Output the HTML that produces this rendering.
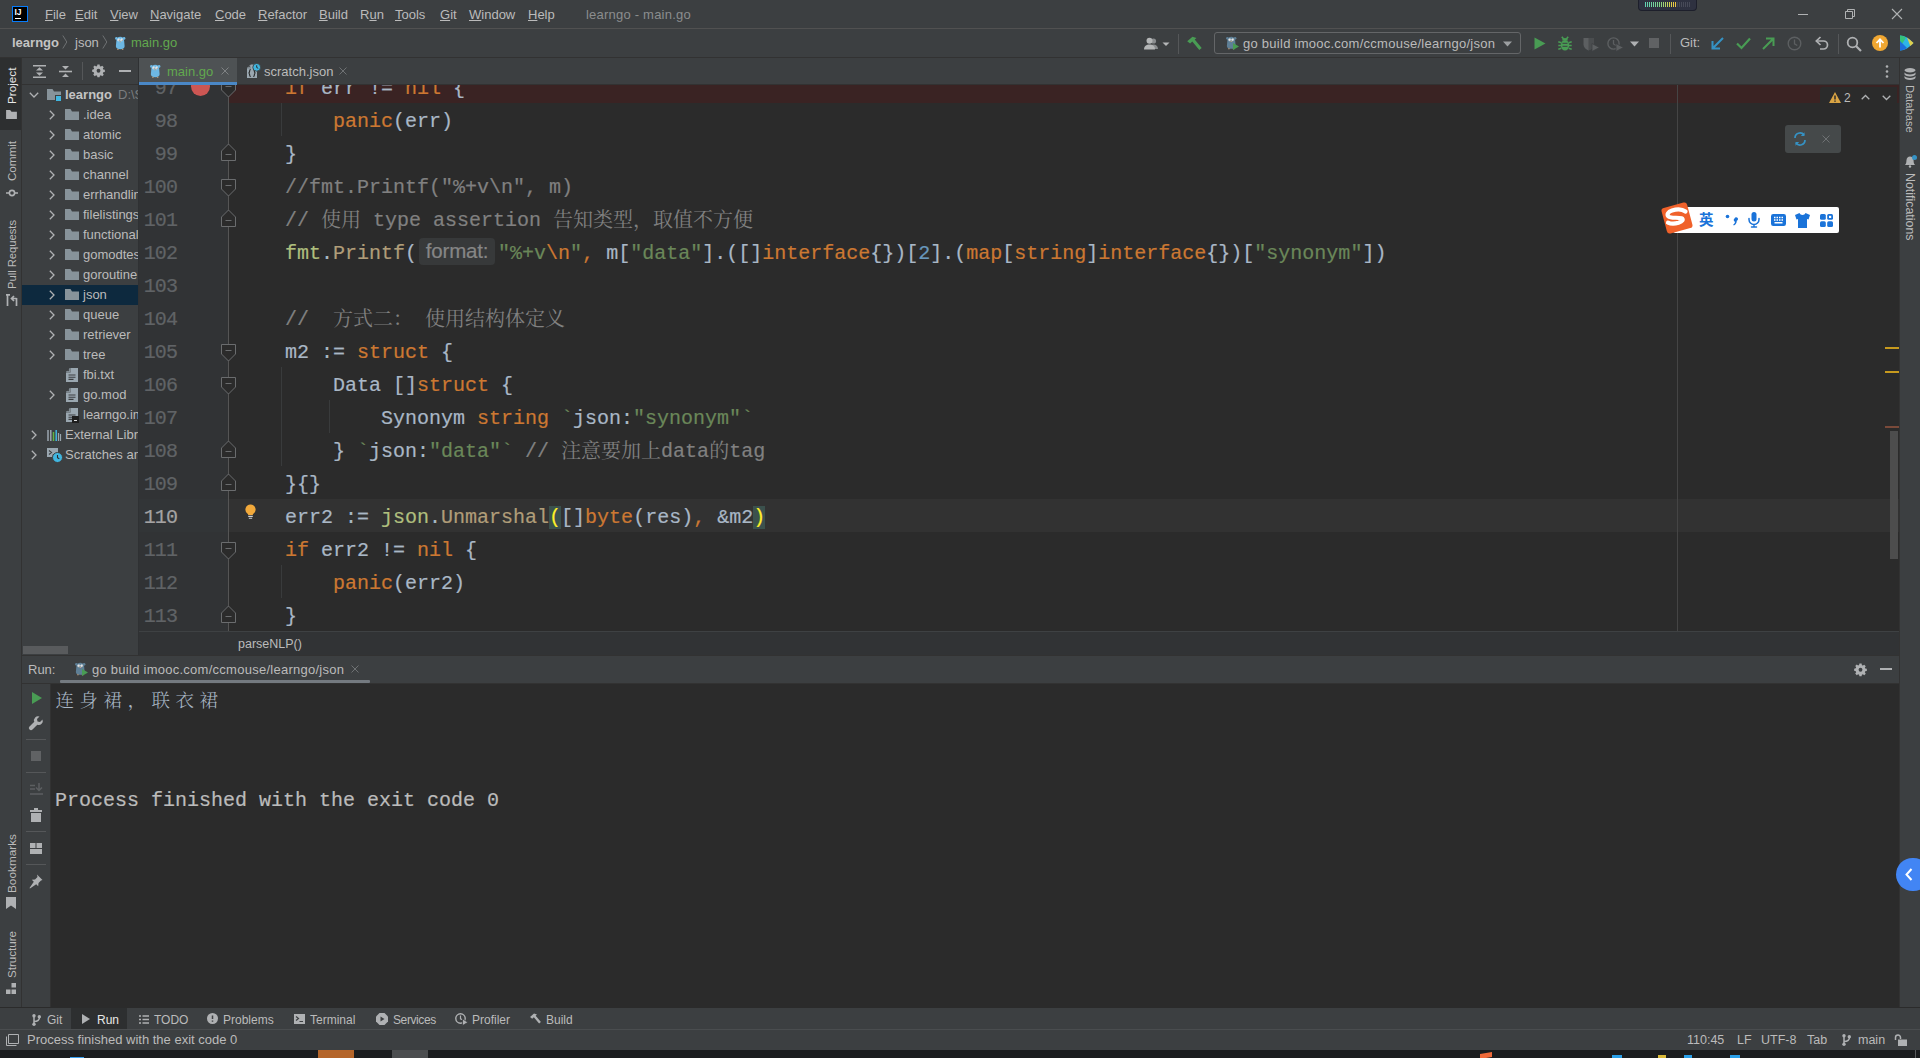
<!DOCTYPE html>
<html lang="en">
<head>
<meta charset="utf-8">
<title>learngo - main.go</title>
<style>
*{box-sizing:border-box;margin:0;padding:0}
html,body{width:1920px;height:1058px;overflow:hidden;background:#3c3f41}
body{position:relative;font-family:"Liberation Sans","Noto Sans CJK SC",sans-serif;font-size:13px;color:#bbbbbb}
.abs{position:absolute}
.t{position:absolute;white-space:nowrap;line-height:16px;height:16px}
svg{position:absolute;overflow:visible}
/* zones */
#titlebar{left:0;top:0;width:1920px;height:28px;background:#3c3f41}
#navbar{left:0;top:28px;width:1920px;height:29px;background:#3c3f41;border-top:1px solid #515151}
#navborder{left:0;top:57px;width:1920px;height:1px;background:#323232}
#leftstrip{left:0;top:58px;width:22px;height:949px;background:#3c3f41;border-right:1px solid #323232}
#rightstrip{left:1899px;top:58px;width:21px;height:949px;background:#3c3f41;border-left:1px solid #323232}
#project{left:22px;top:58px;width:117px;border-right:1px solid #2f3133;height:597px;background:#3c3f41;overflow:hidden}
#editor{left:139px;top:85px;width:1760px;height:546px;background:#2b2b2b;overflow:hidden}
#tabs{left:139px;top:58px;width:1760px;height:27px;background:#3c3f41;border-bottom:1px solid #323232}
#crumbs{left:139px;top:631px;width:1760px;height:24px;background:#313335;border-top:1px solid #3e4143}
#runpanel{left:22px;top:655px;width:1877px;height:352px;background:#2b2b2b;border-top:1px solid #323232}
#bottomstrip{left:0;top:1007px;width:1920px;height:22px;background:#3c3f41;border-top:1px solid #2b2b2b}
#statusbar{left:0;top:1029px;width:1920px;height:21px;background:#3c3f41;border-top:1px solid #4a4d4f}
#taskbar{left:0;top:1050px;width:1920px;height:8px;background:#1b1d1f}
/* code */
.code{-webkit-text-stroke:.2px;font-family:"Liberation Mono","Noto Serif CJK SC",monospace;font-size:20px;line-height:33px;color:#a9b7c6;white-space:pre}
.ln{-webkit-text-stroke:.2px;position:absolute;left:0;width:38px;letter-spacing:-.9px;text-align:right;font-family:"Liberation Mono",monospace;font-size:20px;line-height:33px;height:35px;padding-top:2px;color:#606366}
.cl{position:absolute;left:146px;height:33px;padding-top:2px}
.k{color:#cc7832}.s{color:#6a8759}.n{color:#6897bb}.c{color:#808080}.f{color:#b09d79}.p{color:#afbf7e}.b{color:#ffef28}
.vt{position:absolute;white-space:nowrap;font-size:13px;line-height:16px;transform-origin:0 0}
.hint{display:inline-block;vertical-align:top;margin:1px 3px 0 2px;width:76px;height:27px;line-height:26px;border-radius:4px;background:#37393a;color:#868686;font-family:"Liberation Sans",sans-serif;font-size:20.500px;text-align:center;letter-spacing:-.2px}
.mb{background:#3b514d;color:#ffef28}
#titlebar .t,#navbar .t,#tabs .t,#project .t,#bottomstrip .t,#statusbar .t{margin-top:1px}
#bottomstrip svg,#statusbar svg{margin-top:1px}
.z{position:relative;top:1px;-webkit-text-stroke:0}
</style>
</head>
<body>
<div id="titlebar" class="abs">
<svg style="left:12px;top:6px" width="16" height="16" viewBox="0 0 16 16"><rect x="0.5" y="0.5" width="15" height="15" fill="#000" stroke="#087cfa" stroke-width="1"/><text x="2.5" y="9" font-family="Liberation Sans,sans-serif" font-weight="bold" font-size="8.500" fill="#fff">IJ</text><rect x="3" y="12" width="6" height="1" fill="#fff"/></svg>
<span class="t m" style="left:45px;top:6px"><u>F</u>ile</span>
<span class="t m" style="left:75px;top:6px"><u>E</u>dit</span>
<span class="t m" style="left:110px;top:6px"><u>V</u>iew</span>
<span class="t m" style="left:150px;top:6px"><u>N</u>avigate</span>
<span class="t m" style="left:215px;top:6px"><u>C</u>ode</span>
<span class="t m" style="left:258px;top:6px"><u>R</u>efactor</span>
<span class="t m" style="left:319px;top:6px"><u>B</u>uild</span>
<span class="t m" style="left:360px;top:6px">R<u>u</u>n</span>
<span class="t m" style="left:395px;top:6px"><u>T</u>ools</span>
<span class="t m" style="left:440px;top:6px"><u>G</u>it</span>
<span class="t m" style="left:469px;top:6px"><u>W</u>indow</span>
<span class="t m" style="left:528px;top:6px"><u>H</u>elp</span>
<span class="t" style="left:586px;top:6px;color:#8b8d8e;letter-spacing:.22px">learngo - main.go</span>
<div class="abs" style="left:1638px;top:0;width:59px;height:11px;background:#2e3140;border:1px solid #1d1f2b;border-top:none;border-radius:0 0 4px 4px"></div>
<div class="abs" style="left:1645px;top:2px;width:32px;height:5px;background:linear-gradient(90deg,#5fd0b5,#7fd58a 45%,#e8cf45 85%,#f0c040)"></div>
<div class="abs" style="left:1677px;top:2px;width:14px;height:5px;background:#474a58"></div>
<div class="abs" style="left:1645px;top:2px;width:46px;height:5px;background:repeating-linear-gradient(90deg,transparent 0 1px,#2e3140 1px 2px)"></div>
<svg style="left:1797px;top:8px" width="12" height="12" viewBox="0 0 12 12"><path d="M1 6.5h10" stroke="#b0b2b3" stroke-width="1" fill="none"/></svg>
<svg style="left:1844px;top:8px" width="12" height="12" viewBox="0 0 12 12"><path d="M1.5 3.5h7v7h-7zM3.5 3.5v-2h7v7h-2" stroke="#b0b2b3" stroke-width="1" fill="none"/></svg>
<svg style="left:1891px;top:8px" width="12" height="12" viewBox="0 0 12 12"><path d="M1 1l10 10M11 1L1 11" stroke="#b0b2b3" stroke-width="1.1" fill="none"/></svg>
</div>
<div id="navbar" class="abs">
<span class="t" style="left:12px;top:5px;font-weight:bold;color:#c4c4c4">learngo</span>
<svg style="left:62px;top:5px" width="6" height="16" viewBox="0 0 6 16"><path d="M.8 1.500l4 6.500 -4 6.500" stroke="#6e7173" stroke-width="1" fill="none"/></svg>
<span class="t" style="left:75px;top:5px">json</span>
<svg style="left:102px;top:5px" width="6" height="16" viewBox="0 0 6 16"><path d="M.8 1.500l4 6.500 -4 6.500" stroke="#6e7173" stroke-width="1" fill="none"/></svg>
<svg style="left:115px;top:6.500px" width="10.500" height="14" viewBox="0 0 12 15" preserveAspectRatio="none"><ellipse cx="1.6" cy="2.6" rx="1.5" ry="1.5" fill="#6db7e3"/><ellipse cx="10.4" cy="2.6" rx="1.5" ry="1.5" fill="#6db7e3"/><path d="M1.5 5.5C1.5 2.3 3.5 0.8 6 0.8s4.500 1.500 4.500 4.700c0 2 .5 3.500 .5 5.500 0 2.200 -2 3.200 -5 3.200s-5 -1 -5 -3.200c0 -2 .5 -3.500 .5 -5.500z" fill="#6db7e3"/><circle cx="4.300" cy="4.200" r="1.500" fill="#fff"/><circle cx="7.700" cy="4.200" r="1.500" fill="#fff"/><circle cx="4.700" cy="4.400" r=".6" fill="#222"/><circle cx="8.100" cy="4.400" r=".6" fill="#222"/><ellipse cx="6" cy="6.100" rx="1" ry=".6" fill="#c9a27a"/><ellipse cx="3.300" cy="14.200" rx="1" ry=".6" fill="#c9a27a"/><ellipse cx="8.700" cy="14.200" rx="1" ry=".6" fill="#c9a27a"/></svg>
<span class="t" style="left:131px;top:5px;color:#62a84f">main.go</span>
<!-- right toolbar -->
<svg style="left:1144px;top:8px" width="28" height="14" viewBox="0 0 28 14"><circle cx="9.500" cy="4" r="2.600" fill="#8a8d8f"/><path d="M5 12c0 -3 2 -4.500 4.500 -4.500s4.500 1.500 4.500 4.500z" fill="#8a8d8f"/><circle cx="5.500" cy="3.800" r="3" fill="#b4b6b7"/><path d="M0 12.500c0 -3.500 2.300 -5 5.500 -5s5.500 1.500 5.500 5z" fill="#b4b6b7"/><path d="M18.500 5.500h7l-3.500 3.500z" fill="#b4b6b7"/></svg>
<div class="abs" style="left:1178px;top:5px;width:1px;height:20px;background:#555759"></div>
<svg style="left:1186px;top:7px" width="17" height="16" viewBox="0 0 17 16"><path d="M1.200 5.200L6.500 .8l4 1.200 -1.800 1.600 7 8.400 -2.400 2 -7 -8.400 -2.200 1.900z" fill="#499c54"/></svg>
<div class="abs" style="left:1214px;top:3px;width:307px;height:22px;border:1px solid #646668;border-radius:3px"></div>
<svg style="left:1226px;top:7px" width="10.500" height="13.500" viewBox="0 0 12 15" preserveAspectRatio="none"><ellipse cx="1.6" cy="2.6" rx="1.5" ry="1.5" fill="#5e7f96"/><ellipse cx="10.4" cy="2.6" rx="1.5" ry="1.5" fill="#5e7f96"/><path d="M1.5 5.5C1.5 2.3 3.5 0.8 6 0.8s4.500 1.500 4.500 4.700c0 2 .5 3.500 .5 5.500 0 2.200 -2 3.200 -5 3.200s-5 -1 -5 -3.200c0 -2 .5 -3.500 .5 -5.500z" fill="#5e7f96"/><circle cx="4.300" cy="4.200" r="1.500" fill="#fff"/><circle cx="7.700" cy="4.200" r="1.500" fill="#fff"/><circle cx="4.700" cy="4.400" r=".6" fill="#222"/><circle cx="8.100" cy="4.400" r=".6" fill="#222"/><ellipse cx="6" cy="6.100" rx="1" ry=".6" fill="#c9a27a"/><ellipse cx="3.300" cy="14.200" rx="1" ry=".6" fill="#c9a27a"/><ellipse cx="8.700" cy="14.200" rx="1" ry=".6" fill="#c9a27a"/></svg>
<svg style="left:1233px;top:14px" width="6" height="7" viewBox="0 0 6 7"><path d="M0 0l6 3.500 -6 3.500z" fill="#499c54"/></svg>
<span class="t" style="left:1243px;top:6px;letter-spacing:.26px" id="cfgtext">go build imooc.com/ccmouse/learngo/json</span>
<svg style="left:1503px;top:12px" width="9" height="6" viewBox="0 0 9 6"><path d="M0 .5h9l-4.500 5z" fill="#9c9fa1"/></svg>
<svg style="left:1534px;top:8px" width="12" height="13" viewBox="0 0 12 13"><path d="M.5 .5l11 6 -11 6z" fill="#499c54"/></svg>
<svg style="left:1558px;top:7px" width="14" height="15" viewBox="0 0 14 15"><ellipse cx="7" cy="9.200" rx="4.200" ry="5.300" fill="#499c54"/><path d="M4.200 4.600a2.800 2.600 0 0 1 5.600 0z" fill="#499c54"/><path d="M3.800 .8l1.800 2.200M10.200 .8l-1.800 2.200M.3 5.800l3 1M.3 9.500h3M.3 13.300l3 -1M13.700 5.800l-3 1M13.700 9.500h-3M13.700 13.300l-3 -1" stroke="#499c54" stroke-width="1.600" fill="none"/><path d="M4.500 7.300h5M4.500 10.300h5" stroke="#3c3f41" stroke-width="1" fill="none"/></svg>
<svg style="left:1583px;top:8px" width="17" height="15" viewBox="0 0 17 15"><path d="M.5 1h10v6.500c0 3 -2.500 5 -5 6 -2.500 -1 -5 -3 -5 -6z" fill="#5c5f61"/><path d="M5.500 1v12.400c2.500 -1 5 -3 5 -6V1z" fill="#4a4d4f"/><path d="M9 6.500l7.500 4 -7.500 4z" fill="#5c5f61" stroke="#3c3f41" stroke-width=".8"/></svg>
<svg style="left:1607px;top:8px" width="17" height="15" viewBox="0 0 17 15"><circle cx="6.500" cy="6.500" r="5.600" stroke="#5c5f61" stroke-width="1.400" fill="none"/><path d="M6.500 3v4l2.500 1.500" stroke="#5c5f61" stroke-width="1.300" fill="none"/><path d="M9 6.500l7.500 4 -7.500 4z" fill="#5c5f61" stroke="#3c3f41" stroke-width=".8"/></svg>
<svg style="left:1630px;top:12px" width="9" height="6" viewBox="0 0 9 6"><path d="M0 .5h9l-4.500 5z" fill="#afb1b3"/></svg>
<div class="abs" style="left:1649px;top:9px;width:10px;height:10px;background:#606264"></div>
<div class="abs" style="left:1670px;top:5px;width:1px;height:20px;background:#555759"></div>
<span class="t" style="left:1680px;top:5px">Git:</span>
<svg style="left:1711px;top:8px" width="13" height="13" viewBox="0 0 13 13"><path d="M12 1L2 11M1.500 4v7.500H9" stroke="#3592c4" stroke-width="2" fill="none"/></svg>
<svg style="left:1736px;top:8px" width="15" height="13" viewBox="0 0 15 13"><path d="M1 6.500l4.500 4.500L14 1.500" stroke="#499c54" stroke-width="2.200" fill="none"/></svg>
<svg style="left:1762px;top:8px" width="13" height="13" viewBox="0 0 13 13"><path d="M1 12L11 2M4 1.500h7.500V9" stroke="#499c54" stroke-width="2" fill="none"/></svg>
<svg style="left:1787px;top:7px" width="15" height="15" viewBox="0 0 15 15"><circle cx="7.500" cy="7.500" r="6.300" stroke="#5c5f61" stroke-width="1.400" fill="none"/><path d="M7.500 3.500v4.300l2.800 1.700" stroke="#5c5f61" stroke-width="1.300" fill="none"/></svg>
<svg style="left:1814px;top:7px" width="15" height="15" viewBox="0 0 15 15"><path d="M3 5h6.500a4 4 0 0 1 0 8H6" stroke="#afb1b3" stroke-width="1.700" fill="none"/><path d="M6.500 1L2.300 5l4.200 4" stroke="#afb1b3" stroke-width="1.700" fill="none"/></svg>
<div class="abs" style="left:1838px;top:5px;width:1px;height:20px;background:#555759"></div>
<svg style="left:1846px;top:7px" width="16" height="16" viewBox="0 0 16 16"><circle cx="6.500" cy="6.500" r="4.800" stroke="#afb1b3" stroke-width="1.800" fill="none"/><path d="M10 10l5 5" stroke="#afb1b3" stroke-width="2.200" fill="none"/></svg>
<svg style="left:1872px;top:6px" width="16" height="16" viewBox="0 0 16 16"><circle cx="8" cy="8" r="8" fill="#f0a732"/><path d="M8 12.500V5M4.500 8L8 4.300 11.500 8" stroke="#fff" stroke-width="1.800" fill="none"/></svg>
<svg style="left:1898px;top:6px" width="16" height="16" viewBox="0 0 16 16"><path d="M2 .5c5 0 9 3 13.500 7.500C11 12.500 7 15.500 2 15.500z" fill="#2fb5e8"/><path d="M2 .5c2 0 4 .8 6 2.200L2 12z" fill="#35c37a"/><path d="M2 15.500c2.500 0 5 -1 7 -2.500L2 6z" fill="#1d6fdc"/><path d="M9 2.500c2.200 1.400 4.300 3.300 6.500 5.500 -1 1 -2 2 -3.200 2.900z" fill="#f4d13a" opacity=".9"/></svg>
</div>
<div id="navborder" class="abs"></div>
<div id="leftstrip" class="abs">
<div class="abs" style="left:0;top:0;width:21px;height:72px;background:#2d2f30"></div>
<span class="vt" id="vproj" style="font-size:11.700px;left:4px;top:46px;transform:rotate(-90deg);color:#e8e8e8">Project</span>
<svg style="left:6px;top:52px" width="11" height="9" viewBox="0 0 12 10"><path d="M0 0h4.500l1.500 2H12v8H0z" fill="#afb1b3"/></svg>
<span class="vt" id="vcommit" style="margin-left:1px;font-size:11.600px;left:3px;top:123px;transform:rotate(-90deg)">Commit</span>
<svg style="left:5.500px;top:129.500px" width="12" height="10" viewBox="0 0 12 10"><circle cx="6" cy="5" r="2.600" stroke="#afb1b3" stroke-width="1.600" fill="none"/><path d="M0 5h3M9 5h3" stroke="#afb1b3" stroke-width="1.600"/></svg>
<span class="vt" id="vpull" style="margin-left:1px;font-size:11.200px;left:3px;top:231px;transform:rotate(-90deg)">Pull Requests</span>
<svg style="left:5.500px;top:236px" width="12" height="12" viewBox="0 0 12 12"><path d="M1.500 0v12M0 .8h4M10.500 4v8M10.500 4.500H5.500M8 2L5.500 4.500 8 7" stroke="#afb1b3" stroke-width="1.700" fill="none"/></svg>
<span class="vt" id="vbook" style="margin-left:1px;font-size:11.800px;left:3px;top:835px;transform:rotate(-90deg)">Bookmarks</span>
<svg style="left:6px;top:839px" width="10" height="12" viewBox="0 0 10 12"><path d="M0 0h10v12L5 8.500 0 12z" fill="#afb1b3"/></svg>
<span class="vt" id="vstruct" style="margin-left:1px;font-size:11.600px;left:3px;top:920px;transform:rotate(-90deg)">Structure</span>
<svg style="left:6px;top:925px" width="10" height="12" viewBox="0 0 10 12"><rect x="5.500" y="0" width="4.500" height="4.500" fill="#afb1b3"/><rect x="0" y="6.500" width="4.500" height="4.500" fill="#afb1b3"/><rect x="5.500" y="6.500" width="4.500" height="4.500" fill="#afb1b3"/></svg>
</div>
<div id="rightstrip" class="abs">
<svg style="left:4px;top:10px" width="12" height="12" viewBox="0 0 12 12"><ellipse cx="6" cy="2.200" rx="5.500" ry="2.200" fill="#afb1b3"/><path d="M.5 4.300c0 1.200 2.500 2.100 5.500 2.100s5.500 -.9 5.500 -2.100v2c0 1.200 -2.500 2.100 -5.500 2.100S.5 7.500 .5 6.300zM.5 7.800c0 1.200 2.500 2.100 5.500 2.100s5.500 -.9 5.500 -2.100v2c0 1.200 -2.500 2.100 -5.500 2.100S.5 11 .5 9.800z" fill="#afb1b3"/></svg>
<span class="vt" id="vdb" style="font-size:11.150px;left:17.500px;top:27px;transform:rotate(90deg)">Database</span>
<svg style="left:4px;top:97px" width="14" height="13" viewBox="0 0 14 13"><path d="M1 10c1.500 -1.500 1.200 -3 1.500 -5C2.800 3 4 1.500 6 1.500S9.200 3 9.500 5c.3 2 0 3.500 1.500 5z" fill="#afb1b3"/><circle cx="6" cy="11.500" r="1.200" fill="#afb1b3"/><circle cx="10.500" cy="2.500" r="2.500" fill="#3592c4"/></svg>
<span class="vt" id="vnotif" style="font-size:12.400px;left:18px;top:115px;transform:rotate(90deg)">Notifications</span>
</div>
<div id="project" class="abs">
<div class="abs" style="left:0;top:227px;width:117px;height:20px;background:#0d293e"></div>
<svg style="left:11px;top:7px" width="13" height="13" viewBox="0 0 13 13"><path d="M0 .8h13M0 12.200h13" stroke="#afb1b3" stroke-width="1.600"/><path d="M3 5.500L6.500 2.200 10 5.500zM3 7.500L6.500 10.800 10 7.500z" fill="#afb1b3"/></svg>
<svg style="left:37px;top:7px" width="13" height="13" viewBox="0 0 13 13"><path d="M0 6.500h13" stroke="#afb1b3" stroke-width="1.600"/><path d="M3 1L6.500 4.500 10 1zM3 12L6.500 8.500 10 12z" fill="#afb1b3"/></svg>
<div class="abs" style="left:60px;top:4px;width:1px;height:18px;background:#555759"></div>
<svg style="left:70px;top:5.500px" width="13" height="13.500" viewBox="-0.8 -0.4 15.6 15.6"><path d="M5.700 0h2.600l.4 1.900 1.200.5 1.600-1.100 1.800 1.800-1.100 1.600.5 1.200 1.900.4v2.600l-1.900.4-.5 1.200 1.100 1.600-1.800 1.800-1.600-1.100-1.200.5-.4 1.900H5.700l-.4-1.900-1.200-.5-1.600 1.100L.7 11.900l1.100-1.600-.5-1.200L-.6 8.700V6.100l1.900-.4.500-1.200L.7 2.900 2.500 1.100l1.600 1.100 1.200-.5z" fill="#afb1b3"/><circle cx="7" cy="7.400" r="2.300" fill="#3c3f41"/></svg>
<div class="abs" style="left:97px;top:12px;width:12px;height:2px;background:#afb1b3"></div>
<div class="abs" style="left:0;top:26px;width:117px;height:1px;background:#323232"></div>
<svg style="left:7px;top:34px" width="10" height="6" viewBox="0 0 10 6"><path d="M.8 .8L5 5 9.200 .8" stroke="#afb1b3" stroke-width="1.300" fill="none"/></svg><svg style="left:25px;top:31px" width="14" height="11" viewBox="0 0 14 11"><path d="M0 0h5.500l1.500 2.500H14V11H0z" fill="#87939a"/></svg><div class="abs" style="left:33px;top:37px;width:7px;height:7px;background:#40b6e0;border:1px solid #3c3f41"></div><span class="t" style="left:43px;top:28px;font-weight:bold;color:#c4c4c4">learngo</span><span class="t" style="left:96px;top:28px;color:#7a7d7f">D:\S</span>
<svg style="left:27px;top:52px" width="6" height="10" viewBox="0 0 6 10"><path d="M.8 .8L5 5 .8 9.200" stroke="#afb1b3" stroke-width="1.300" fill="none"/></svg><svg style="left:43px;top:51px" width="14" height="11" viewBox="0 0 14 11"><path d="M0 0h5.500l1.500 2.500H14V11H0z" fill="#87939a"/></svg><span class="t" style="left:61px;top:48px">.idea</span>
<svg style="left:27px;top:72px" width="6" height="10" viewBox="0 0 6 10"><path d="M.8 .8L5 5 .8 9.200" stroke="#afb1b3" stroke-width="1.300" fill="none"/></svg><svg style="left:43px;top:71px" width="14" height="11" viewBox="0 0 14 11"><path d="M0 0h5.500l1.500 2.500H14V11H0z" fill="#87939a"/></svg><span class="t" style="left:61px;top:68px">atomic</span>
<svg style="left:27px;top:92px" width="6" height="10" viewBox="0 0 6 10"><path d="M.8 .8L5 5 .8 9.200" stroke="#afb1b3" stroke-width="1.300" fill="none"/></svg><svg style="left:43px;top:91px" width="14" height="11" viewBox="0 0 14 11"><path d="M0 0h5.500l1.500 2.500H14V11H0z" fill="#87939a"/></svg><span class="t" style="left:61px;top:88px">basic</span>
<svg style="left:27px;top:112px" width="6" height="10" viewBox="0 0 6 10"><path d="M.8 .8L5 5 .8 9.200" stroke="#afb1b3" stroke-width="1.300" fill="none"/></svg><svg style="left:43px;top:111px" width="14" height="11" viewBox="0 0 14 11"><path d="M0 0h5.500l1.500 2.500H14V11H0z" fill="#87939a"/></svg><span class="t" style="left:61px;top:108px">channel</span>
<svg style="left:27px;top:132px" width="6" height="10" viewBox="0 0 6 10"><path d="M.8 .8L5 5 .8 9.200" stroke="#afb1b3" stroke-width="1.300" fill="none"/></svg><svg style="left:43px;top:131px" width="14" height="11" viewBox="0 0 14 11"><path d="M0 0h5.500l1.500 2.500H14V11H0z" fill="#87939a"/></svg><span class="t" style="left:61px;top:128px">errhandling</span>
<svg style="left:27px;top:152px" width="6" height="10" viewBox="0 0 6 10"><path d="M.8 .8L5 5 .8 9.200" stroke="#afb1b3" stroke-width="1.300" fill="none"/></svg><svg style="left:43px;top:151px" width="14" height="11" viewBox="0 0 14 11"><path d="M0 0h5.500l1.500 2.500H14V11H0z" fill="#87939a"/></svg><span class="t" style="left:61px;top:148px">filelistingserver</span>
<svg style="left:27px;top:172px" width="6" height="10" viewBox="0 0 6 10"><path d="M.8 .8L5 5 .8 9.200" stroke="#afb1b3" stroke-width="1.300" fill="none"/></svg><svg style="left:43px;top:171px" width="14" height="11" viewBox="0 0 14 11"><path d="M0 0h5.500l1.500 2.500H14V11H0z" fill="#87939a"/></svg><span class="t" style="left:61px;top:168px">functional</span>
<svg style="left:27px;top:192px" width="6" height="10" viewBox="0 0 6 10"><path d="M.8 .8L5 5 .8 9.200" stroke="#afb1b3" stroke-width="1.300" fill="none"/></svg><svg style="left:43px;top:191px" width="14" height="11" viewBox="0 0 14 11"><path d="M0 0h5.500l1.500 2.500H14V11H0z" fill="#87939a"/></svg><span class="t" style="left:61px;top:188px">gomodtest</span>
<svg style="left:27px;top:212px" width="6" height="10" viewBox="0 0 6 10"><path d="M.8 .8L5 5 .8 9.200" stroke="#afb1b3" stroke-width="1.300" fill="none"/></svg><svg style="left:43px;top:211px" width="14" height="11" viewBox="0 0 14 11"><path d="M0 0h5.500l1.500 2.500H14V11H0z" fill="#87939a"/></svg><span class="t" style="left:61px;top:208px">goroutine</span>
<svg style="left:27px;top:232px" width="6" height="10" viewBox="0 0 6 10"><path d="M.8 .8L5 5 .8 9.200" stroke="#afb1b3" stroke-width="1.300" fill="none"/></svg><svg style="left:43px;top:231px" width="14" height="11" viewBox="0 0 14 11"><path d="M0 0h5.500l1.500 2.500H14V11H0z" fill="#87939a"/></svg><span class="t" style="left:61px;top:228px">json</span>
<svg style="left:27px;top:252px" width="6" height="10" viewBox="0 0 6 10"><path d="M.8 .8L5 5 .8 9.200" stroke="#afb1b3" stroke-width="1.300" fill="none"/></svg><svg style="left:43px;top:251px" width="14" height="11" viewBox="0 0 14 11"><path d="M0 0h5.500l1.500 2.500H14V11H0z" fill="#87939a"/></svg><span class="t" style="left:61px;top:248px">queue</span>
<svg style="left:27px;top:272px" width="6" height="10" viewBox="0 0 6 10"><path d="M.8 .8L5 5 .8 9.200" stroke="#afb1b3" stroke-width="1.300" fill="none"/></svg><svg style="left:43px;top:271px" width="14" height="11" viewBox="0 0 14 11"><path d="M0 0h5.500l1.500 2.500H14V11H0z" fill="#87939a"/></svg><span class="t" style="left:61px;top:268px">retriever</span>
<svg style="left:27px;top:292px" width="6" height="10" viewBox="0 0 6 10"><path d="M.8 .8L5 5 .8 9.200" stroke="#afb1b3" stroke-width="1.300" fill="none"/></svg><svg style="left:43px;top:291px" width="14" height="11" viewBox="0 0 14 11"><path d="M0 0h5.500l1.500 2.500H14V11H0z" fill="#87939a"/></svg><span class="t" style="left:61px;top:288px">tree</span>
<svg style="left:44px;top:310px" width="12" height="14" viewBox="0 0 12 14"><path d="M4.500 0H12v14H0V4.500z" fill="#9aa7b0"/><path d="M0 4.500L4.500 0v4.500z" fill="#3c3f41"/><path d="M3.800 .3v3.500H.3" stroke="#9aa7b0" stroke-width="1" fill="none"/><path d="M2.500 7h7M2.500 9.200h7M2.500 11.400h5" stroke="#3c3f41" stroke-width="1.100"/></svg><span class="t" style="left:61px;top:308px">fbi.txt</span>
<svg style="left:27px;top:332px" width="6" height="10" viewBox="0 0 6 10"><path d="M.8 .8L5 5 .8 9.200" stroke="#afb1b3" stroke-width="1.300" fill="none"/></svg><svg style="left:44px;top:330px" width="12" height="14" viewBox="0 0 12 14"><path d="M4.500 0H12v14H0V4.500z" fill="#9aa7b0"/><path d="M0 4.500L4.500 0v4.500z" fill="#3c3f41"/><path d="M3.800 .3v3.500H.3" stroke="#9aa7b0" stroke-width="1" fill="none"/><path d="M2.500 7h7M2.500 9.200h7M2.500 11.400h5" stroke="#3c3f41" stroke-width="1.100"/></svg><span class="t" style="left:61px;top:328px">go.mod</span>
<svg style="left:44px;top:350px" width="12" height="14" viewBox="0 0 12 14"><path d="M4.500 0H12v14H0V4.500z" fill="#9aa7b0"/><path d="M0 4.500L4.500 0v4.500z" fill="#3c3f41"/><path d="M3.800 .3v3.500H.3" stroke="#9aa7b0" stroke-width="1" fill="none"/><path d="M2.500 7h7M2.500 9.200h7M2.500 11.400h5" stroke="#3c3f41" stroke-width="1.100"/></svg><div class="abs" style="left:50px;top:358px;width:7px;height:7px;background:#1e1e1e"></div><div class="abs" style="left:52px;top:362px;width:3px;height:1px;background:#ddd"></div><span class="t" style="left:61px;top:348px">learngo.iml</span>
<svg style="left:9px;top:372px" width="6" height="10" viewBox="0 0 6 10"><path d="M.8 .8L5 5 .8 9.200" stroke="#afb1b3" stroke-width="1.300" fill="none"/></svg><svg style="left:25px;top:371px" width="14" height="12" viewBox="0 0 14 12"><path d="M1 1v11M3.800 1v11" stroke="#9aa7b0" stroke-width="1.500"/><path d="M6.500 3v9" stroke="#62b543" stroke-width="1.500"/><path d="M9.200 1v11" stroke="#40b6e0" stroke-width="1.500"/><path d="M11.500 4v8M13.500 5v7" stroke="#9aa7b0" stroke-width="1.200"/></svg><span class="t" style="left:43px;top:368px">External Libraries</span>
<svg style="left:9px;top:392px" width="6" height="10" viewBox="0 0 6 10"><path d="M.8 .8L5 5 .8 9.200" stroke="#afb1b3" stroke-width="1.300" fill="none"/></svg><svg style="left:25px;top:389px" width="16" height="16" viewBox="0 0 16 16"><path d="M0 1h11v9H0z" fill="#9aa7b0"/><path d="M2 3.500l2.500 2L2 7.500M5.500 8H9" stroke="#3c3f41" stroke-width="1.100" fill="none"/><circle cx="10.500" cy="10.500" r="5" fill="#40b6e0" stroke="#3c3f41" stroke-width="1"/><path d="M10.500 8v2.800l1.800 1" stroke="#2b2b2b" stroke-width="1.100" fill="none"/></svg><span class="t" style="left:43px;top:388px">Scratches and Consoles</span>
<div class="abs" style="left:1px;top:588px;width:45px;height:8px;background:#595b5d"></div>
</div>
<div id="tabs" class="abs">
<div class="abs" style="left:0;top:0;width:98px;height:27px;background:#4e5254"></div>
<div class="abs" style="left:0;top:24px;width:98px;height:3px;background:#4a88c7"></div>
<svg style="left:10.500px;top:5.500px" width="10.500" height="14" viewBox="0 0 12 15" preserveAspectRatio="none"><ellipse cx="1.6" cy="2.6" rx="1.5" ry="1.5" fill="#6db7e3"/><ellipse cx="10.4" cy="2.6" rx="1.5" ry="1.5" fill="#6db7e3"/><path d="M1.5 5.5C1.5 2.3 3.5 0.8 6 0.8s4.500 1.500 4.500 4.700c0 2 .5 3.500 .5 5.500 0 2.200 -2 3.200 -5 3.200s-5 -1 -5 -3.200c0 -2 .5 -3.500 .5 -5.500z" fill="#6db7e3"/><circle cx="4.300" cy="4.200" r="1.500" fill="#fff"/><circle cx="7.700" cy="4.200" r="1.500" fill="#fff"/><circle cx="4.700" cy="4.400" r=".6" fill="#222"/><circle cx="8.100" cy="4.400" r=".6" fill="#222"/><ellipse cx="6" cy="6.100" rx="1" ry=".6" fill="#c9a27a"/><ellipse cx="3.300" cy="14.200" rx="1" ry=".6" fill="#c9a27a"/><ellipse cx="8.700" cy="14.200" rx="1" ry=".6" fill="#c9a27a"/></svg>
<span class="t" style="left:28px;top:5px;color:#62a84f">main.go</span>
<svg style="left:82px;top:9px" width="8" height="8" viewBox="0 0 8 8"><path d="M.5 .5l7 7M7.500 .5l-7 7" stroke="#7f8284" stroke-width="1" fill="none"/></svg>
<svg style="left:108px;top:5px" width="14" height="16" viewBox="0 0 14 16"><path d="M3.800 1.500H10V15H0V5.300z" fill="#9aa7b0"/><path d="M0 5.300L3.800 1.500v3.800z" fill="#3c3f41"/><path d="M3.300 2v2.800H.5" stroke="#9aa7b0" stroke-width="1" fill="none"/><path d="M3.800 6.500c-1.200 0 -1.200 1 -1.200 1.800s0 1.500 -1 1.700c1 .2 1 .9 1 1.700s0 1.800 1.200 1.800M6.200 6.500c1.200 0 1.200 1 1.200 1.800s0 1.500 1 1.700c-1 .2 -1 .9 -1 1.700s0 1.800 -1.200 1.800" stroke="#2b2d2e" stroke-width="1.200" fill="none"/><circle cx="9.700" cy="4.300" r="3.900" fill="#40b6e0" stroke="#3c3f41" stroke-width=".9"/><path d="M9.700 2.300v2.200l1.500 .8" stroke="#2b2b2b" stroke-width="1" fill="none"/></svg>
<span class="t" style="left:125px;top:5px">scratch.json</span>
<svg style="left:200px;top:9px" width="8" height="8" viewBox="0 0 8 8"><path d="M.5 .5l7 7M7.500 .5l-7 7" stroke="#6e7173" stroke-width="1" fill="none"/></svg>
<svg style="left:1746px;top:7px" width="4" height="13" viewBox="0 0 4 13"><circle cx="2" cy="1.500" r="1.300" fill="#afb1b3"/><circle cx="2" cy="6.500" r="1.300" fill="#afb1b3"/><circle cx="2" cy="11.500" r="1.300" fill="#afb1b3"/></svg>
</div>
<div id="editor" class="abs">
<div class="abs" style="left:0;top:0;width:89px;height:546px;background:#313335"></div>
<div class="abs" style="left:89px;top:0;width:1671px;height:18px;background:#3a2323"></div>
<div class="abs" style="left:0;top:414px;width:1760px;height:33px;background:#323232"></div>
<div class="abs" style="left:0;top:414px;width:89px;height:33px;background:#323537"></div>
<div class="abs" style="left:89px;top:0;width:1px;height:546px;background:#555555"></div>
<div class="abs" style="left:1538px;top:0;width:1px;height:546px;background:#454545"></div>
<div class="abs" style="left:142px;top:18px;width:1px;height:33px;background:#393b3c"></div>
<div class="abs" style="left:142px;top:282px;width:1px;height:99px;background:#393b3c"></div>
<div class="abs" style="left:190px;top:315px;width:1px;height:33px;background:#393b3c"></div>
<div class="abs" style="left:142px;top:480px;width:1px;height:33px;background:#393b3c"></div>
<div class="ln" style="top:-15px">97</div>
<div class="cl code" style="top:-15px"><span class="k">if</span> err != <span class="k">nil</span> {</div>
<div class="ln" style="top:18px">98</div>
<div class="cl code" style="top:18px">    <span class="k">panic</span>(err)</div>
<div class="ln" style="top:51px">99</div>
<div class="cl code" style="top:51px">}</div>
<div class="ln" style="top:84px">100</div>
<div class="cl code" style="top:84px"><span class="c">//fmt.Printf("%+v\n", m)</span></div>
<div class="ln" style="top:117px">101</div>
<div class="cl code" style="top:117px"><span class="c">// <span class="z">使用</span> type assertion <span class="z">告知类型，取值不方便</span></span></div>
<div class="ln" style="top:150px">102</div>
<div class="cl code" style="top:150px"><span class="p">fmt</span>.<span class="f">Printf</span>(<span class="hint">format:</span><span class="s">"%+v<span class="k">\n</span>"</span><span class="k">,</span> m[<span class="s">"data"</span>].([]<span class="k">interface</span>{})[<span class="n">2</span>].(<span class="k">map</span>[<span class="k">string</span>]<span class="k">interface</span>{})[<span class="s">"synonym"</span>])</div>
<div class="ln" style="top:183px">103</div>
<div class="cl code" style="top:183px"></div>
<div class="ln" style="top:216px">104</div>
<div class="cl code" style="top:216px"><span class="c">//  <span class="z">方式二：</span> <span class="z">使用结构体定义</span></span></div>
<div class="ln" style="top:249px">105</div>
<div class="cl code" style="top:249px">m2 := <span class="k">struct</span> {</div>
<div class="ln" style="top:282px">106</div>
<div class="cl code" style="top:282px">    Data []<span class="k">struct</span> {</div>
<div class="ln" style="top:315px">107</div>
<div class="cl code" style="top:315px">        Synonym <span class="k">string</span> <span class="s">`</span>json:<span class="s">"synonym"</span><span class="s">`</span></div>
<div class="ln" style="top:348px">108</div>
<div class="cl code" style="top:348px">    } <span class="s">`</span>json:<span class="s">"data"</span><span class="s">`</span> <span class="c">// <span class="z">注意要加上</span>data<span class="z">的</span>tag</span></div>
<div class="ln" style="top:381px">109</div>
<div class="cl code" style="top:381px">}{}</div>
<div class="ln" style="top:414px;color:#a4a3a3">110</div>
<div class="cl code" style="top:414px">err2 := <span class="p">json</span>.<span class="f">Unmarshal</span><span class="mb">(</span>[]<span class="k">byte</span>(res)<span class="k">,</span> &amp;m2<span class="mb">)</span></div>
<div class="ln" style="top:447px">111</div>
<div class="cl code" style="top:447px"><span class="k">if</span> err2 != <span class="k">nil</span> {</div>
<div class="ln" style="top:480px">112</div>
<div class="cl code" style="top:480px">    <span class="k">panic</span>(err2)</div>
<div class="ln" style="top:513px">113</div>
<div class="cl code" style="top:513px">}</div>
<svg style="left:82px;top:-5px" width="15" height="18" viewBox="0 0 15 18"><path d="M.5 .5h14v9.500l-7 7 -7 -7z" fill="#2b2b2b" stroke="#6a6c6e" stroke-width="1"/><path d="M4.500 6.500h6" stroke="#6a6c6e" stroke-width="1"/></svg>
<svg style="left:82px;top:58px" width="15" height="18" viewBox="0 0 15 18"><path d="M.5 17.500h14V8l-7 -7 -7 7z" fill="#2b2b2b" stroke="#6a6c6e" stroke-width="1"/><path d="M4.500 11.500h6" stroke="#6a6c6e" stroke-width="1"/></svg>
<svg style="left:82px;top:94px" width="15" height="18" viewBox="0 0 15 18"><path d="M.5 .5h14v9.500l-7 7 -7 -7z" fill="#2b2b2b" stroke="#6a6c6e" stroke-width="1"/><path d="M4.500 6.500h6" stroke="#6a6c6e" stroke-width="1"/></svg>
<svg style="left:82px;top:124px" width="15" height="18" viewBox="0 0 15 18"><path d="M.5 17.500h14V8l-7 -7 -7 7z" fill="#2b2b2b" stroke="#6a6c6e" stroke-width="1"/><path d="M4.500 11.500h6" stroke="#6a6c6e" stroke-width="1"/></svg>
<svg style="left:82px;top:259px" width="15" height="18" viewBox="0 0 15 18"><path d="M.5 .5h14v9.500l-7 7 -7 -7z" fill="#2b2b2b" stroke="#6a6c6e" stroke-width="1"/><path d="M4.500 6.500h6" stroke="#6a6c6e" stroke-width="1"/></svg>
<svg style="left:82px;top:292px" width="15" height="18" viewBox="0 0 15 18"><path d="M.5 .5h14v9.500l-7 7 -7 -7z" fill="#2b2b2b" stroke="#6a6c6e" stroke-width="1"/><path d="M4.500 6.500h6" stroke="#6a6c6e" stroke-width="1"/></svg>
<svg style="left:82px;top:355px" width="15" height="18" viewBox="0 0 15 18"><path d="M.5 17.500h14V8l-7 -7 -7 7z" fill="#2b2b2b" stroke="#6a6c6e" stroke-width="1"/><path d="M4.500 11.500h6" stroke="#6a6c6e" stroke-width="1"/></svg>
<svg style="left:82px;top:388px" width="15" height="18" viewBox="0 0 15 18"><path d="M.5 17.500h14V8l-7 -7 -7 7z" fill="#2b2b2b" stroke="#6a6c6e" stroke-width="1"/><path d="M4.500 11.500h6" stroke="#6a6c6e" stroke-width="1"/></svg>
<svg style="left:82px;top:457px" width="15" height="18" viewBox="0 0 15 18"><path d="M.5 .5h14v9.500l-7 7 -7 -7z" fill="#2b2b2b" stroke="#6a6c6e" stroke-width="1"/><path d="M4.500 6.500h6" stroke="#6a6c6e" stroke-width="1"/></svg>
<svg style="left:82px;top:520px" width="15" height="18" viewBox="0 0 15 18"><path d="M.5 17.500h14V8l-7 -7 -7 7z" fill="#2b2b2b" stroke="#6a6c6e" stroke-width="1"/><path d="M4.500 11.500h6" stroke="#6a6c6e" stroke-width="1"/></svg>
<div class="abs" style="left:52px;top:-8.500px;width:19px;height:19px;border-radius:9.500px;background:#cc5653"></div>
<svg style="left:106px;top:419px" width="11" height="15.600" viewBox="0 0 12 17"><path d="M6 .5a5.500 5.500 0 0 1 3.200 10c-.5 .4 -.7 .9 -.7 1.500h-5c0 -.6 -.2 -1.100 -.7 -1.500A5.500 5.500 0 0 1 6 .5z" fill="#f2a93b"/><path d="M3.500 13.500h5M4.200 15.500h3.600" stroke="#d0d0d0" stroke-width="1.200"/></svg>
<div class="abs" style="left:1681px;top:2px;width:77px;height:21px;background:#2b2b2b;border-radius:3px 0 0 0"></div>
<svg style="left:1690px;top:7px" width="12" height="11" viewBox="0 0 12 11"><path d="M6 0l6 11H0z" fill="#d9a343"/><path d="M6 3.500v4M6 8.500v1.300" stroke="#2b2b2b" stroke-width="1.500"/></svg>
<span class="t" style="left:1705px;top:5px;font-size:12px">2</span>
<svg style="left:1722px;top:9px" width="9" height="6" viewBox="0 0 9 6"><path d="M.7 5.300L4.500 1.500 8.300 5.300" stroke="#afb1b3" stroke-width="1.300" fill="none"/></svg>
<svg style="left:1743px;top:10px" width="9" height="6" viewBox="0 0 9 6"><path d="M.7 .7L4.500 4.500 8.300 .7" stroke="#afb1b3" stroke-width="1.300" fill="none"/></svg>
<div class="abs" style="left:1646px;top:40px;width:56px;height:28px;background:#45494a;border-radius:3px"></div>
<svg style="left:1654px;top:47px" width="14" height="14" viewBox="0 0 14 14"><path d="M2 6a5 5 0 0 1 9 -3M12 8a5 5 0 0 1 -9 3" stroke="#3592c4" stroke-width="1.700" fill="none"/><path d="M11.500 .3v3.700H7.800zM2.500 13.700V10h3.700z" fill="#3592c4"/></svg>
<svg style="left:1683px;top:50px" width="8" height="8" viewBox="0 0 8 8"><path d="M.5 .5l7 7M7.500 .5l-7 7" stroke="#6e7173" stroke-width="1" fill="none"/></svg>
<div class="abs" style="left:1746px;top:262px;width:14px;height:2px;background:#c79a1e"></div>
<div class="abs" style="left:1746px;top:286px;width:14px;height:2px;background:#c79a1e"></div>
<div class="abs" style="left:1746px;top:341px;width:14px;height:2px;background:#7a4a3a"></div>
<div class="abs" style="left:1751px;top:346px;width:8px;height:128px;background:#4d4d4d"></div>
</div>
<div id="crumbs" class="abs"><span class="t" style="left:99px;top:4px;font-size:12.500px">parseNLP()</span></div>
<div id="runpanel" class="abs">
<div class="abs" style="left:0;top:0;width:1877px;height:27px;background:#3c3f41"></div>
<div class="abs" style="left:0;top:27px;width:1877px;height:1px;background:#323232"></div>
<span class="t" style="left:6px;top:6px">Run:</span>
<svg style="left:53px;top:6px" width="10.500" height="13.500" viewBox="0 0 12 15" preserveAspectRatio="none"><ellipse cx="1.6" cy="2.6" rx="1.5" ry="1.5" fill="#5e7f96"/><ellipse cx="10.4" cy="2.6" rx="1.5" ry="1.5" fill="#5e7f96"/><path d="M1.5 5.5C1.5 2.3 3.5 0.8 6 0.8s4.500 1.500 4.500 4.700c0 2 .5 3.500 .5 5.500 0 2.200 -2 3.200 -5 3.200s-5 -1 -5 -3.200c0 -2 .5 -3.500 .5 -5.500z" fill="#5e7f96"/><circle cx="4.300" cy="4.200" r="1.500" fill="#fff"/><circle cx="7.700" cy="4.200" r="1.500" fill="#fff"/><circle cx="4.700" cy="4.400" r=".6" fill="#222"/><circle cx="8.100" cy="4.400" r=".6" fill="#222"/><ellipse cx="6" cy="6.100" rx="1" ry=".6" fill="#c9a27a"/><ellipse cx="3.300" cy="14.200" rx="1" ry=".6" fill="#c9a27a"/><ellipse cx="8.700" cy="14.200" rx="1" ry=".6" fill="#c9a27a"/></svg>
<svg style="left:60px;top:13px" width="6" height="7" viewBox="0 0 6 7"><path d="M0 0l6 3.500 -6 3.500z" fill="#499c54"/></svg>
<span class="t" style="left:70px;top:6px;letter-spacing:.26px">go build imooc.com/ccmouse/learngo/json</span>
<svg style="left:329px;top:9px" width="8" height="8" viewBox="0 0 8 8"><path d="M.5 .5l7 7M7.500 .5l-7 7" stroke="#6e7173" stroke-width="1" fill="none"/></svg>
<div class="abs" style="left:38px;top:24px;width:310px;height:3px;background:#747a80;border-radius:1px"></div>
<svg style="left:1831.500px;top:6.500px" width="13" height="13.500" viewBox="-0.8 -0.4 15.6 15.6"><path d="M5.700 0h2.600l.4 1.900 1.200.5 1.600-1.100 1.800 1.800-1.100 1.600.5 1.200 1.900.4v2.600l-1.900.4-.5 1.200 1.100 1.600-1.800 1.800-1.600-1.100-1.200.5-.4 1.900H5.700l-.4-1.900-1.200-.5-1.600 1.100L.7 11.900l1.100-1.600-.5-1.200L-.6 8.700V6.100l1.900-.4.500-1.200L.7 2.900 2.500 1.100l1.600 1.100 1.200-.5z" fill="#afb1b3"/><circle cx="7" cy="7.400" r="2.300" fill="#3c3f41"/></svg>
<div class="abs" style="left:1858px;top:12px;width:12px;height:2px;background:#afb1b3"></div>
<div class="abs" style="left:0;top:28px;width:29px;height:325px;background:#3c3f41;border-right:1px solid #323232"></div>
<svg style="left:10px;top:36px" width="10" height="12" viewBox="0 0 10 12"><path d="M0 0l10 6 -10 6z" fill="#499c54"/></svg>
<svg style="left:7px;top:60px" width="14" height="14" viewBox="0 0 14 14"><path d="M13.500 3.500l-2.500 2.500 -2.500 -.5 -.5 -2.500L10.500 .5a4 4 0 0 0 -5.200 5.200L.5 10.500a1.800 1.800 0 0 0 3 3l4.800 -4.800a4 4 0 0 0 5.200 -5.200z" fill="#afb1b3"/></svg>
<div class="abs" style="left:4px;top:83px;width:20px;height:1px;background:#555759"></div>
<div class="abs" style="left:9px;top:95px;width:10px;height:10px;background:#606264"></div>
<div class="abs" style="left:4px;top:116px;width:20px;height:1px;background:#555759"></div>
<svg style="left:8px;top:127px" width="13" height="12" viewBox="0 0 13 12"><path d="M0 2.500h5M0 6h5M0 11h13" stroke="#5c5f61" stroke-width="1.500"/><path d="M9 0v7M6 4.500l3 3 3 -3" stroke="#5c5f61" stroke-width="1.500" fill="none"/></svg>
<svg style="left:8px;top:152px" width="12" height="14" viewBox="0 0 12 14"><path d="M0 2h12v2H0zM4 0h4v2H4zM1 5h10v9H1z" fill="#afb1b3"/></svg>
<div class="abs" style="left:4px;top:175px;width:20px;height:1px;background:#555759"></div>
<svg style="left:8px;top:187px" width="12" height="11" viewBox="0 0 12 11"><path d="M0 0h5.500v5H0zM6.500 0H12v5H6.500zM0 6h12v5H0z" fill="#afb1b3"/></svg>
<div class="abs" style="left:4px;top:208px;width:20px;height:1px;background:#555759"></div>
<svg style="left:7px;top:218px" width="14" height="14" viewBox="0 0 14 14"><path d="M8 .5l5.500 5.500 -1.500 .5 -2.500 2.500 -.3 3.200 -2 -2L1 14.500 .5 14 4.800 7.800l-2 -2 3.200 -.3L8.500 3z" fill="#afb1b3"/></svg>
<div class="code abs" style="left:33.500px;top:30px;letter-spacing:5.500px;font-size:18.500px;font-weight:300;-webkit-text-stroke:0">连身裙，联衣裙</div>
<div class="code abs" style="left:33px;top:128px;color:#bbbbbb">Process finished with the exit code 0</div>
</div>
<div id="bottomstrip" class="abs">
<div class="abs" style="left:71px;top:0;width:56px;height:21px;background:#2d2f30"></div>
<svg style="left:32px;top:5px" width="9" height="12" viewBox="0 0 9 12"><path d="M2 1v10M2 7.500c4 0 5.500 -1.500 5.500 -4.500" stroke="#afb1b3" stroke-width="1.500" fill="none"/><circle cx="2" cy="1.800" r="1.700" fill="#afb1b3"/><circle cx="2" cy="10.200" r="1.700" fill="#afb1b3"/><circle cx="7.300" cy="2.800" r="1.700" fill="#afb1b3"/></svg>
<span class="t" style="left:47px;top:3px;font-size:12px">Git</span>
<svg style="left:82px;top:5px" width="8" height="10" viewBox="0 0 8 10"><path d="M0 0l8 5 -8 5z" fill="#afb1b3"/></svg>
<span class="t" style="left:97px;top:3px;font-size:12px;color:#e8e8e8">Run</span>
<svg style="left:139px;top:6px" width="10" height="9" viewBox="0 0 10 9"><path d="M0 1h2M3.500 1H10M0 4.500h2M3.500 4.500H10M0 8h2M3.500 8H10" stroke="#afb1b3" stroke-width="1.500"/></svg>
<span class="t" style="left:154px;top:3px;font-size:12px">TODO</span>
<svg style="left:207px;top:4px" width="11" height="11" viewBox="0 0 11 11"><circle cx="5.500" cy="5.500" r="5.500" fill="#afb1b3"/><path d="M5.500 2.500v3.500M5.500 7.500v1.300" stroke="#3c3f41" stroke-width="1.500"/></svg>
<span class="t" style="left:223px;top:3px;font-size:12px">Problems</span>
<svg style="left:294px;top:5px" width="11" height="10" viewBox="0 0 11 10"><rect width="11" height="10" fill="#afb1b3"/><path d="M2 2.500l2.500 2L2 6.500M5.500 7.500H9" stroke="#3c3f41" stroke-width="1.200" fill="none"/></svg>
<span class="t" style="left:310px;top:3px;font-size:12px">Terminal</span>
<svg style="left:376px;top:4px" width="12" height="12" viewBox="0 0 12 12"><path d="M3.500 0h5L12 3.500v5L8.500 12h-5L0 8.500v-5z" fill="#afb1b3"/><path d="M4.500 3.500l4 2.500 -4 2.500z" fill="#3c3f41"/></svg>
<span class="t" style="left:393px;top:3px;font-size:12px;letter-spacing:-.4px">Services</span>
<svg style="left:455px;top:4px" width="13" height="13" viewBox="0 0 13 13"><circle cx="5.500" cy="5.500" r="4.700" stroke="#afb1b3" stroke-width="1.400" fill="none"/><path d="M5.500 2.500v3.300l2 1" stroke="#afb1b3" stroke-width="1.200" fill="none"/><path d="M7.500 6l5.500 3.300 -5.500 3.300z" fill="#afb1b3" stroke="#3c3f41" stroke-width=".8"/></svg>
<span class="t" style="left:472px;top:3px;font-size:12px">Profiler</span>
<svg style="left:529px;top:4px" width="13" height="12" viewBox="0 0 17 16"><path d="M1.200 5.200L6.500 .8l4 1.200 -1.800 1.600 7 8.400 -2.400 2 -7 -8.400 -2.200 1.900z" fill="#afb1b3"/></svg>
<span class="t" style="left:546px;top:3px;font-size:12px">Build</span>
</div>
<div id="statusbar" class="abs">
<svg style="left:6px;top:3px" width="13" height="12" viewBox="0 0 13 12"><path d="M2.500 .5h10v9h-10zM.5 2.500v9h10" stroke="#afb1b3" stroke-width="1" fill="none"/></svg>
<span class="t" style="left:27px;top:1px">Process finished with the exit code 0</span>
<span class="t" style="left:1687px;top:1px;font-size:12.500px">110:45</span>
<span class="t" style="left:1737px;top:1px;font-size:12.500px">LF</span>
<span class="t" style="left:1761px;top:1px;font-size:12.500px">UTF-8</span>
<span class="t" style="left:1807px;top:1px;font-size:12.500px">Tab</span>
<svg style="left:1842px;top:3px" width="9" height="12" viewBox="0 0 9 12"><path d="M2 1v10M2 7.500c4 0 5.500 -1.500 5.500 -4.500" stroke="#afb1b3" stroke-width="1.500" fill="none"/><circle cx="2" cy="1.800" r="1.700" fill="#afb1b3"/><circle cx="2" cy="10.200" r="1.700" fill="#afb1b3"/><circle cx="7.300" cy="2.800" r="1.700" fill="#afb1b3"/></svg>
<span class="t" style="left:1858px;top:1px;font-size:12.500px">main</span>
<svg style="left:1894px;top:3px" width="13" height="12" viewBox="0 0 13 12"><path d="M1.500 6V3.500a2.500 2.500 0 0 1 5 0V5" stroke="#afb1b3" stroke-width="1.500" fill="none"/><rect x="4" y="5.500" width="9" height="6.500" fill="#afb1b3"/></svg>
</div>
<div id="taskbar" class="abs">
<div class="abs" style="left:318px;top:0;width:36px;height:8px;background:#b4652a"></div>
<div class="abs" style="left:392px;top:0;width:36px;height:8px;background:#4b4d4f"></div>
<div class="abs" style="left:70px;top:7px;width:14px;height:1px;background:#3aa0f0"></div>
<div class="abs" style="left:1480px;top:3px;width:12px;height:5px;background:#ef6a3a;transform:skewY(-10deg)"></div>
<div class="abs" style="left:1612px;top:5px;width:10px;height:3px;background:#2a9fe8"></div>
<div class="abs" style="left:1658px;top:5px;width:8px;height:3px;background:#d9b93a"></div>
<div class="abs" style="left:1684px;top:5px;width:8px;height:3px;background:#2a9fe8"></div>
<div class="abs" style="left:1730px;top:5px;width:10px;height:3px;background:#2a9fe8"></div>
<div class="abs" style="left:1915px;top:0;width:1px;height:8px;background:#5a5c5e"></div>
</div>
<div id="ime" class="abs" style="left:1661px;top:202px;width:180px;height:32px">
<div class="abs" style="left:12px;top:5px;width:166px;height:26px;background:#fff;border-radius:2px"></div>
<svg style="left:0;top:0" width="32" height="32" viewBox="0 0 32 32"><rect x="2.800" y="2.800" width="26.400" height="26.400" rx="3" fill="#f0612a" transform="rotate(-15 16 16)"/><path d="M24.500 9.500c-3 -2.200 -8.500 -2.600 -13.500 -1C7 9.800 5.500 12.500 7.500 14.500c2.500 2.300 9 .5 13 1.800 2.500 .9 1 3.200 -3 4.500 -4 1.200 -8 1 -10.500 -.2" stroke="#fff" stroke-width="4.200" fill="none" stroke-linecap="round"/></svg>
<span class="t" style="left:38px;top:9px;font-size:14.500px;line-height:18px;height:18px;font-weight:bold;color:#1a73d9;font-family:'Liberation Sans','Noto Sans CJK SC',sans-serif">英</span>
<svg style="left:64px;top:12px" width="14" height="14" viewBox="0 0 14 14"><circle cx="2.500" cy="2.500" r="1.800" fill="#1a73d9"/><path d="M9.500 4.500a1.800 1.800 0 1 1 2.300 2.300c0 2.200 -1 3.800 -3 4.700l-.6 -.9c1.200 -.8 1.800 -1.700 1.800 -2.900a1.800 1.800 0 0 1 -.5 -3.200z" fill="#1a73d9"/></svg>
<svg style="left:87px;top:10px" width="12" height="16" viewBox="0 0 12 16"><rect x="3.500" y="0" width="5" height="9.500" rx="2.500" fill="#1a73d9"/><path d="M1 6.500v1a5 5 0 0 0 10 0v-1M6 12.500v2M3.500 15h5" stroke="#1a73d9" stroke-width="1.500" fill="none" stroke-linecap="round"/></svg>
<svg style="left:110px;top:12px" width="15" height="12" viewBox="0 0 15 12"><rect x=".75" y=".75" width="13.500" height="10.500" rx="1.500" stroke="#1a73d9" stroke-width="1.500" fill="#1a73d9"/><path d="M3 3.500h1.500M5.500 3.500H7M8 3.500h1.500M10.500 3.500H12M3 6h1.500M5.500 6H7M8 6h1.500M10.500 6H12M3.500 8.700h8" stroke="#fff" stroke-width="1.400"/></svg>
<svg style="left:134px;top:11px" width="15" height="15" viewBox="0 0 15 15"><path d="M4.500 0c.5 1.200 1.600 2 3 2s2.500 -.8 3 -2L15 2l-1.500 4.500L12 6v9H3V6l-1.500 .5L0 2z" fill="#1a73d9"/></svg>
<svg style="left:159px;top:12px" width="13" height="13" viewBox="0 0 13 13"><rect x="0" y="0" width="5.800" height="5.800" rx="1.500" fill="#1a73d9"/><rect x="7.200" y="0" width="5.800" height="5.800" rx="1.500" fill="#1a73d9"/><rect x="9" y="1.800" width="2.200" height="2.200" fill="#fff"/><rect x="0" y="7.200" width="5.800" height="5.800" rx="1.500" fill="#1a73d9"/><rect x="7.200" y="7.200" width="5.800" height="5.800" rx="1.500" fill="#1a73d9"/></svg>
</div>
<div id="floatbtn" class="abs" style="left:1896px;top:858px;width:34px;height:33px;border-radius:16.500px;background:#4285f4"></div>
<svg style="left:1905px;top:868px" width="8" height="13" viewBox="0 0 8 13"><path d="M6.500 1L1.500 6.500l5 5.500" stroke="#fff" stroke-width="2" fill="none"/></svg>
</body>
</html>
